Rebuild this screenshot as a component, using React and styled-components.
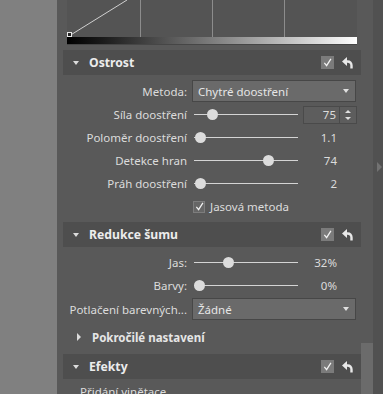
import React from 'react';
import styled, {createGlobalStyle} from 'styled-components';

const GlobalStyle = createGlobalStyle`
    html, body {
        margin: 0;
        padding: 0;
        background: #808080;
        overflow: hidden;
    }
    body {
        font-family: "Noto Sans", "Open Sans", sans-serif;
        font-size: 11.5px;
        color: #dcdcdc;
    }
`;

const Frame = styled.div`
    display: flex;
    width: 383px;
    height: 394px;
    overflow: hidden;
`;

const Gutter = styled.div`
    width: 57px;
    flex: none;
    background: #808080;
`;

const Panel = styled.div`
    display: flex;
    flex: none;
    width: 316px;
    background: #595959;
`;

const Content = styled.div`
    width: 304px;
    padding-left: 6px;
    box-sizing: border-box;
    display: flex;
    flex-direction: column;
    & > * {
        flex-shrink: 0;
    }
`;

const ScrollTrack = styled.div`
    width: 12px;
    padding-top: 343px;
    display: flex;
    flex-direction: column;
    .thumb {
        flex: 1;
        background: #6b6b6b;
    }
`;

const RightStrip = styled.div`
    width: 10px;
    flex: none;
    background: #515151;
    padding-top: 162px;
    box-sizing: border-box;
    .arrow {
        margin-left: 4px;
        width: 0;
        height: 0;
        border-top: 5px solid transparent;
        border-bottom: 5px solid transparent;
        border-left: 5px solid #727272;
    }
`;

const CurveBox = styled.div`
    margin-left: 4px;
    width: 290px;
    margin-bottom: 5px;
    .graph {
        height: 37px;
        background: #545454;
        display: block;
    }
    .ramp {
        height: 7px;
        background: linear-gradient(to right, #000 0%, #1a1a1a 12%, #fff 100%);
        border-bottom: 1px solid #464646;
    }
`;

const SectionHeader = styled.div`
    height: 25px;
    display: flex;
    align-items: center;
    background: #4e4e4e;
    padding: 0 8px 0 10px;
    margin-top: ${p => p.$top || 0}px;
    h2 {
        flex: 1;
        margin: 0 0 1px 10px;
        font-size: 12.2px;
        font-weight: 700;
        color: #ececec;
    }
    .tools {
        display: flex;
        align-items: center;
        gap: 8px;
    }
`;

const Caret = styled.span`
    width: 0;
    height: 0;
    flex: none;
    ${p =>
        p.$open
            ? `border-left: 3.5px solid transparent;
               border-right: 3.5px solid transparent;
               border-top: 4px solid #dcdcdc;`
            : `border-top: 4px solid transparent;
               border-bottom: 4px solid transparent;
               border-left: 4px solid #dcdcdc;
               margin-left: 2px;`}
`;

const HeaderCheck = styled.span`
    width: 13px;
    height: 13px;
    background: #7b7b7b;
    display: flex;
    align-items: center;
    justify-content: center;
`;

const Body = styled.div`
    display: flex;
    flex-direction: column;
    padding: ${p => p.$pad || '5px 0 0'};
`;

const Row = styled.div`
    display: flex;
    align-items: center;
    height: ${p => p.$h || 23}px;
    margin-top: ${p => p.$mt || 0}px;
    margin-bottom: ${p => p.$mb || 0}px;
`;

const Label = styled.span`
    width: 124px;
    flex: none;
    text-align: right;
    white-space: nowrap;
    margin-right: ${p => p.$gap || 7}px;
`;

const Select = styled.div`
    width: 164px;
    height: 22px;
    box-sizing: border-box;
    border: 1px solid #474747;
    background: #6a6a6a;
    display: flex;
    align-items: center;
    padding: 0 6px 0 5px;
    color: #e6e6e6;
    span {
        flex: 1;
    }
    .drop {
        flex: none;
        width: 0;
        height: 0;
        border-left: 3.5px solid transparent;
        border-right: 3.5px solid transparent;
        border-top: 4px solid #e0e0e0;
    }
`;

const Track = styled.div`
    position: relative;
    width: 104px;
    height: 11px;
    flex: none;
    &::before {
        content: '';
        position: absolute;
        left: 0;
        right: 0;
        top: 5px;
        height: 1px;
        background: #d4d4d4;
    }
    .thumb {
        position: absolute;
        top: 0;
        width: 11px;
        height: 11px;
        border-radius: 50%;
        background: #dcdcdc;
    }
`;

const Value = styled.div`
    margin-left: 5px;
    width: 37px;
    height: 18px;
    box-sizing: border-box;
    padding-right: 3px;
    text-align: right;
    line-height: 18px;
    flex: none;
`;

const Spin = styled.div`
    display: flex;
    margin-left: 5px;
    height: 18px;
    border: 1px solid #4a4a4a;
    box-sizing: border-box;
    background: #5d5d5d;
    .num {
        width: 36px;
        text-align: right;
        padding-right: 3px;
        box-sizing: border-box;
        line-height: 16px;
        border-right: 1px solid #4a4a4a;
    }
    .arrows {
        width: 16px;
        display: flex;
        flex-direction: column;
        align-items: center;
        justify-content: center;
        gap: 4px;
    }
    .up, .down {
        width: 0;
        height: 0;
        border-left: 3px solid transparent;
        border-right: 3px solid transparent;
    }
    .up {
        border-bottom: 3px solid #e0e0e0;
    }
    .down {
        border-top: 3px solid #e0e0e0;
    }
`;

const CheckRow = styled.label`
    display: flex;
    align-items: center;
    height: 23px;
    padding-left: 130px;
    gap: 5px;
    .box {
        width: 12px;
        height: 12px;
        box-sizing: border-box;
        border: 1px solid #7d7d7d;
        background: #666;
        display: flex;
        align-items: center;
        justify-content: center;
    }
`;

const Expander = styled.div`
    display: flex;
    align-items: center;
    height: 24px;
    padding-left: 12px;
    margin-top: 5px;
    b {
        margin-left: 11px;
        font-size: 11.5px;
        color: #e6e6e6;
    }
`;

const SubLabel = styled.div`
    padding: 5px 0 0 17px;
    height: 18px;
`;

const Check = ({size = 9}) => (
    <svg width={size} height={size} viewBox="0 0 10 10">
        <polyline points="1.5,5.5 4,8.5 8.8,1" fill="none" stroke="#f2f2f2" strokeWidth="1.4" />
    </svg>
);

const UndoIcon = () => (
    <svg width="11" height="12" viewBox="0 0 11 12">
        <polygon points="0,4.5 5,0 5,9" fill="#e8e8e8" />
        <path d="M4 4.5 H5.5 Q9.5 4.5 9.5 8.5 V11.5" fill="none" stroke="#e8e8e8" strokeWidth="2.4" />
    </svg>
);

const Header = ({title, top}) => (
    <SectionHeader $top={top}>
        <Caret $open />
        <h2>{title}</h2>
        <div className="tools">
            <HeaderCheck>
                <Check />
            </HeaderCheck>
            <UndoIcon />
        </div>
    </SectionHeader>
);

const Slider = ({label, pos, value, spin}) => (
    <Row>
        <Label>{label}</Label>
        <Track>
            <div className="thumb" style={{left: `${pos * 93}px`}} />
        </Track>
        {spin ? (
            <Spin>
                <div className="num">{value}</div>
                <div className="arrows">
                    <span className="up" />
                    <span className="down" />
                </div>
            </Spin>
        ) : (
            <Value>{value}</Value>
        )}
    </Row>
);

const sharpen = [
    {label: 'Síla doostření', pos: 0.145, value: '75', spin: true},
    {label: 'Poloměr doostření', pos: 0.016, value: '1.1'},
    {label: 'Detekce hran', pos: 0.737, value: '74'},
    {label: 'Práh doostření', pos: 0.016, value: '2'}
];

const noise = [
    {label: 'Jas:', pos: 0.317, value: '32%'},
    {label: 'Barvy:', pos: 0, value: '0%'}
];

const App = () => (
    <Frame>
        <GlobalStyle />
        <Gutter />
        <Panel>
            <Content>
                <CurveBox>
                    <svg className="graph" width="290" height="37" viewBox="0 0 290 37">
                        <line x1="73.5" y1="0" x2="73.5" y2="37" stroke="#8c8c8c" />
                        <line x1="145.5" y1="0" x2="145.5" y2="37" stroke="#8c8c8c" />
                        <line x1="217.5" y1="0" x2="217.5" y2="37" stroke="#8c8c8c" />
                        <line x1="2" y1="36" x2="60" y2="0" stroke="#d0d0d0" />
                        <rect x="0.5" y="32.5" width="4" height="4" fill="#222" stroke="#e8e8e8" />
                    </svg>
                    <div className="ramp" />
                </CurveBox>

                <Header title="Ostrost" />
                <Body>
                    <Row $h={22} $mb={1}>
                        <Label $gap={5}>Metoda:</Label>
                        <Select>
                            <span>Chytré doostření</span>
                            <i className="drop" />
                        </Select>
                    </Row>
                    {sharpen.map(s => (
                        <Slider key={s.label} {...s} />
                    ))}
                    <CheckRow>
                        <span className="box">
                            <Check />
                        </span>
                        Jasová metoda
                    </CheckRow>
                </Body>

                <Header title="Redukce šumu" top={4} />
                <Body $pad="4px 0 0">
                    {noise.map(s => (
                        <Slider key={s.label} {...s} />
                    ))}
                    <Row $h={22} $mt={1}>
                        <Label $gap={5}>Potlačení barevných...</Label>
                        <Select>
                            <span>Žádné</span>
                            <i className="drop" />
                        </Select>
                    </Row>
                </Body>
                <Expander>
                    <Caret />
                    <b>Pokročilé nastavení</b>
                </Expander>

                <Header title="Efekty" top={5} />
                <SubLabel>Přidání vinětace</SubLabel>
            </Content>
            <ScrollTrack>
                <div className="thumb" />
            </ScrollTrack>
        </Panel>
        <RightStrip>
            <div className="arrow" />
        </RightStrip>
    </Frame>
);

export default App;
